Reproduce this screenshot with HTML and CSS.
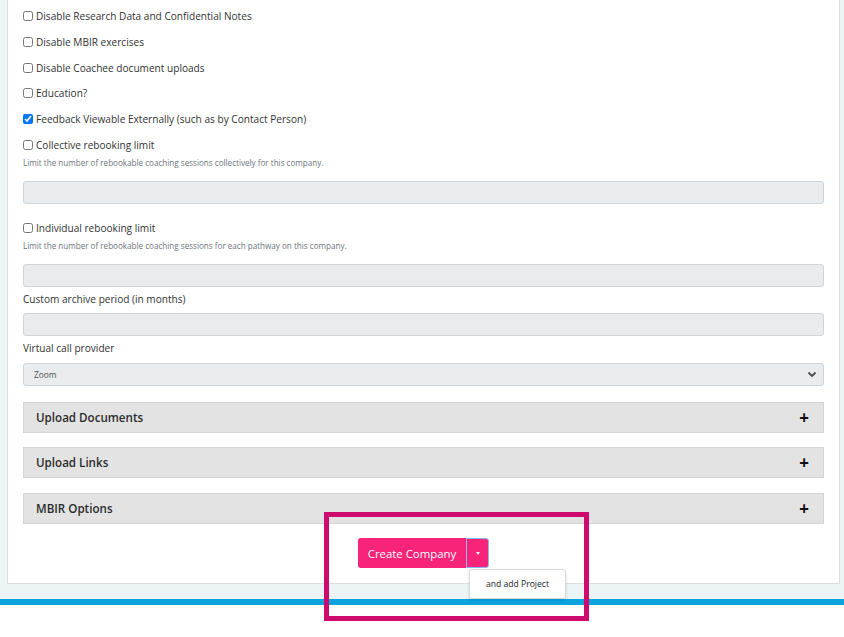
FILE: index.html
```html
<!DOCTYPE html>
<html>
<head>
	<meta charset="UTF-8">
	<title>Create Company</title>
	<link rel="stylesheet" href="styles.css">
</head>
<body>
	<div class="page">
		<div class="card">
			<label class="check"><input type="checkbox"> Disable Research Data and Confidential Notes</label>
			<label class="check"><input type="checkbox"> Disable MBIR exercises</label>
			<label class="check"><input type="checkbox"> Disable Coachee document uploads</label>
			<label class="check"><input type="checkbox"> Education?</label>
			<label class="check"><input type="checkbox" checked> Feedback Viewable Externally (such as by Contact Person)</label>
			<label class="check"><input type="checkbox"> Collective rebooking limit</label>
			<div class="help">Limit the number of rebookable coaching sessions collectively for this company.</div>
			<div class="field"></div>

			<label class="check first"><input type="checkbox"> Individual rebooking limit</label>
			<div class="help">Limit the number of rebookable coaching sessions for each pathway on this company.</div>
			<div class="field"></div>

			<div class="label">Custom archive period (in months)</div>
			<div class="field"></div>

			<div class="label">Virtual call provider</div>
			<div class="field select">
				<span>Zoom</span>
				<svg width="10" height="7" viewBox="0 0 10 7"><path d="M1.5 1.5 L5 5 L8.5 1.5" fill="none" stroke="#4a4a4a" stroke-width="1.8"/></svg>
			</div>

			<div class="panel"><span>Upload Documents</span><b class="plus">+</b></div>
			<div class="panel"><span>Upload Links</span><b class="plus">+</b></div>
			<div class="panel"><span>MBIR Options</span><b class="plus">+</b></div>

			<div class="actions">
				<div class="split">
					<span class="btn-main">Create Company</span>
					<span class="btn-caret"><i></i></span>
					<div class="menu">and add Project</div>
				</div>
			</div>
		</div>
	</div>
	<div class="bar"></div>
	<div class="footer"></div>
	<div class="mark"></div>
</body>
</html>
```

FILE: styles.css
```css
body{
	margin: 0;
	background: #fff;
	font-family: "Open Sans", "Liberation Sans", sans-serif;
	color: #212529;
	position: relative;
}
.page{
	background: #edf4f6;
	padding-bottom: 15px;
}
.card{
	margin: 0 4px 0 7px;
	background: #fff;
	border: 1px solid #dcdfe0;
	border-top: none;
	padding: 7.5px 15px 15px;
}
.check{
	display: flex;
	align-items: center;
	height: 17px;
	margin-bottom: 8.8px;
	font-size: 10.1px;
	color: #333;
	white-space: nowrap;
}
.check input{
	width: 10px;
	height: 10px;
	margin: 0 3px 0 0;
}
.check.first{
	margin-top: 15.5px;
	margin-bottom: 0;
}
.help{
	font-size: 8.1px;
	color: #6c757d;
	height: 12px;
	line-height: 12px;
	margin-top: -5.3px;
	white-space: nowrap;
}
.check.first + .help{
	margin-top: 3.5px;
}
.field{
	height: 21px;
	background: #e9ecef;
	border: 1px solid #ced4da;
	border-radius: 3px;
	margin-top: 12px;
}
.label{
	font-size: 10.1px;
	color: #333;
	height: 17px;
	line-height: 17px;
	margin-top: 4px;
}
.label + .field{
	margin-top: 5.5px;
}
.select{
	display: flex;
	align-items: center;
	justify-content: space-between;
	padding: 0 6px 0 10px;
	font-size: 8.4px;
	color: #495057;
}
.panel{
	display: flex;
	align-items: center;
	justify-content: space-between;
	height: 29px;
	margin-top: 16px;
	padding: 0 14px 0 12px;
	background: #e3e3e3;
	border: 1px solid #d4d4d4;
	font-size: 11.6px;
	font-weight: 600;
	color: #2b2b2b;
}
.panel + .panel{
	margin-top: 14.5px;
}
.plus{
	font-size: 17px;
	font-weight: 700;
	color: #111;
	line-height: 1;
}
.actions{
	display: flex;
	justify-content: center;
	margin-top: 14.5px;
}
.split{
	position: relative;
	display: flex;
	height: 30px;
}
.btn-main{
	display: flex;
	align-items: center;
	justify-content: center;
	width: 108px;
	background: #f72479;
	color: #fff;
	font-size: 11.4px;
	white-space: nowrap;
	border-radius: 3px 0 0 3px;
}
.btn-caret{
	display: flex;
	align-items: center;
	justify-content: center;
	width: 21px;
	background: #f72479;
	border: 1px solid #8ab8f0;
	border-radius: 0 3px 3px 0;
}
.btn-caret i{
	width: 0;
	height: 0;
	border-left: 2.5px solid transparent;
	border-right: 2.5px solid transparent;
	border-top: 3px solid #fff;
}
.menu{
	position: absolute;
	left: 111px;
	top: 31px;
	width: 95px;
	height: 28px;
	line-height: 28px;
	text-align: center;
	background: #fff;
	border: 1px solid #dcdcdc;
	border-radius: 3px;
	box-shadow: 0 1px 3px rgba(0,0,0,0.15);
	font-size: 8.6px;
	color: #212529;
	white-space: nowrap;
}
.bar{
	height: 6px;
	background: #0aa3dd;
}
.footer{
	height: 33px;
}
.mark{
	position: absolute;
	left: 324px;
	top: 512px;
	width: 255px;
	height: 99px;
	border: 5px solid #cd0a6d;
}
```
